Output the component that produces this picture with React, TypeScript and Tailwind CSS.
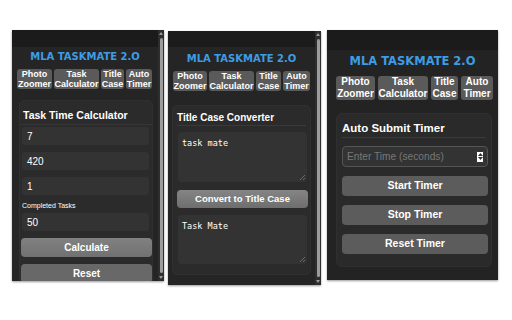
import React from 'react'

const tabs = [
  ['Photo', 'Zoomer'],
  ['Task', 'Calculator'],
  ['Title', 'Case'],
  ['Auto', 'Timer'],
]

function Tabs({ widths, text, gap }: { widths: string[]; text: string; gap: string }) {
  return (
    <div className={`flex ${gap}`}>
      {tabs.map((t, i) => (
        <div
          key={t[1]}
          className={`${widths[i]} ${text} h-full flex flex-col items-center justify-center rounded-[3px] bg-[#5a5a5a] text-white font-bold text-center whitespace-nowrap font-['Liberation_Sans',Arial,sans-serif]`}
        >
          <span>{t[0]}</span>
          <span>{t[1]}</span>
        </div>
      ))}
    </div>
  )
}

function Scrollbar() {
  return (
    <div className="w-[6px] h-full bg-[#2e2e2e] flex flex-col items-center py-[1px]">
      <svg width="6" height="5" viewBox="0 0 6 5"><path d="M3 1L5 4H1z" fill="#9a9a9a" /></svg>
      <div className="flex-1 w-[3px] my-[2px] rounded-full bg-[#9c9c9c]" />
      <svg width="6" height="5" viewBox="0 0 6 5"><path d="M3 4L5 1H1z" fill="#9a9a9a" /></svg>
    </div>
  )
}

function Grip() {
  return (
    <svg className="absolute right-[2px] bottom-[2px]" width="6" height="6" viewBox="0 0 6 6">
      <path d="M6 1L1 6M6 4L4 6" stroke="#777" strokeWidth="0.8" />
    </svg>
  )
}

const title = "font-['DejaVu_Sans',Verdana,sans-serif] font-bold text-[#3d9de4] text-center"
const sans = "font-['Liberation_Sans',Arial,sans-serif]"

function CalcPanel() {
  const field = `ml-[2px] w-[127px] h-[18px] shrink-0 rounded-[3px] bg-[#333] text-white text-[10px] pl-[5px] flex items-center ${sans}`
  return (
    <div className="w-[152px] h-[251px] mt-[30px] ml-[12px] flex bg-[#252525] overflow-hidden shadow-[0_1px_2px_rgba(0,0,0,0.4)]">
      <div className="flex-1 flex flex-col">
        <div className="h-[17px] bg-[#1b1b1b] shrink-0" />
        <div className={`h-[18px] shrink-0 flex items-center justify-center text-[10px] ${title}`}>MLA TASKMATE 2.O</div>
        <div className="h-[23px] shrink-0 mt-[4px] ml-[5px]">
          <Tabs widths={['w-[35px]', 'w-[45px]', 'w-[23px]', 'w-[26px]']} text="text-[9px] leading-[10px]" gap="gap-[2px]" />
        </div>
        <div className="mt-[8px] ml-[7px] w-[134px] flex-1 rounded-t-[5px] bg-[#2b2b2b] border border-[#303030] flex flex-col">
          <div className={`pt-[7px] h-[24px] shrink-0 pl-[3px] text-white font-bold text-[10.5px] border-b border-[#353535] ${sans}`}>Task Time Calculator</div>
          <div className={`${field} mt-[2px]`}>7</div>
          <div className={`${field} mt-[7px]`}>420</div>
          <div className={`${field} mt-[7px]`}>1</div>
          <div className={`mt-[5px] h-[12px] shrink-0 pl-[2px] text-[7px] text-white flex items-center ${sans}`}>Completed Tasks</div>
          <div className={`${field} mt-[1px]`}>50</div>
          <div className={`mt-[7px] ml-[1px] w-[131px] h-[19px] shrink-0 rounded-[4px] bg-gradient-to-b from-[#818181] to-[#717171] text-white font-bold text-[10px] flex items-center justify-center ${sans}`}>Calculate</div>
          <div className={`mt-[7px] ml-[1px] w-[131px] h-[19px] shrink-0 rounded-[4px] bg-[#686868] text-white font-bold text-[10px] flex items-center justify-center ${sans}`}>Reset</div>
        </div>
      </div>
      <Scrollbar />
    </div>
  )
}

function TitlePanel() {
  const area = "relative ml-[5px] w-[129px] rounded-[3px] bg-[#333] text-white text-[8.5px] font-['DejaVu_Sans_Mono',monospace] px-[4px] py-[5px]"
  return (
    <div className="w-[153px] h-[254px] mt-[31px] ml-[4px] flex bg-[#252525] overflow-hidden shadow-[0_1px_2px_rgba(0,0,0,0.4)]">
      <div className="flex-1 flex flex-col">
        <div className="h-[16px] bg-[#1b1b1b] shrink-0" />
        <div className={`h-[22px] flex items-center justify-center text-[10px] ${title}`}>MLA TASKMATE 2.O</div>
        <div className="h-[24px] mt-[2px] ml-[5px]">
          <Tabs widths={['w-[34px]', 'w-[45px]', 'w-[25px]', 'w-[27px]']} text="text-[9px] leading-[10px]" gap="gap-[2px]" />
        </div>
        <div className="mt-[10px] ml-[4px] w-[139px] h-[170px] rounded-[5px] bg-[#2b2b2b] border border-[#303030] flex flex-col">
          <div className={`pt-[4px] h-[20px] mx-[4px] text-white font-bold text-[10px] border-b border-[#3a3a3a] ${sans}`}>Title Case Converter</div>
          <div className={`${area} mt-[6px] h-[50px]`}>task mate<Grip /></div>
          <div className={`mt-[8px] ml-[4px] w-[131px] h-[18px] rounded-[4px] bg-gradient-to-b from-[#858585] to-[#6e6e6e] text-white font-bold text-[9.5px] flex items-center justify-center ${sans}`}>Convert to Title Case</div>
          <div className={`${area} mt-[7px] h-[49px]`}>Task Mate<Grip /></div>
        </div>
      </div>
      <Scrollbar />
    </div>
  )
}

function TimerPanel() {
  const btn = `mt-[9px] ml-[5px] w-[146px] h-[20px] rounded-[4px] bg-[#5c5c5c] text-white font-bold text-[10.5px] flex items-center justify-center ${sans}`
  return (
    <div className="w-[171px] h-[250px] mt-[30px] ml-[6px] flex flex-col bg-[#232323] overflow-hidden shadow-[0_1px_2px_rgba(0,0,0,0.4)]">
      <div className="h-[20px] bg-[#1b1b1b] shrink-0" />
      <div className={`h-[24px] flex items-center justify-center text-[11.5px] ${title}`}>MLA TASKMATE 2.O</div>
      <div className="h-[27px] mt-[2px] ml-[9px]">
        <Tabs widths={['w-[39px]', 'w-[50px]', 'w-[27px]', 'w-[32px]']} text="text-[10px] leading-[12px]" gap="gap-[3px]" />
      </div>
      <div className="mt-[10px] ml-[9px] w-[156px] h-[154px] rounded-[6px] bg-[#2a2a2a] border border-[#2f2f2f] flex flex-col">
        <div className={`pt-[6px] h-[24px] mx-[5px] text-white font-bold text-[11.5px] border-b border-[#3a3a3a] ${sans}`}>Auto Submit Timer</div>
        <div className={`mt-[8px] ml-[5px] w-[146px] h-[21px] rounded-[4px] bg-[#333] border border-[#555] flex items-center justify-between pl-[4px] pr-[3px] text-[10.2px] text-[#777] ${sans}`}>
          <span>Enter Time (seconds)</span>
          <div className="w-[8px] h-[12px] bg-white border border-[#333] rounded-[1px] flex flex-col items-center justify-center gap-[1px]">
            <svg width="5" height="3" viewBox="0 0 5 3"><path d="M2.5 0L5 3H0z" fill="#333" /></svg>
            <svg width="5" height="3" viewBox="0 0 5 3"><path d="M2.5 3L5 0H0z" fill="#333" /></svg>
          </div>
        </div>
        <div className={btn}>Start Timer</div>
        <div className={btn}>Stop Timer</div>
        <div className={btn}>Reset Timer</div>
      </div>
    </div>
  )
}

export default function App() {
  return (
    <div className="w-[512px] h-[320px] bg-white flex items-start overflow-hidden">
      <CalcPanel />
      <TitlePanel />
      <TimerPanel />
    </div>
  )
}
